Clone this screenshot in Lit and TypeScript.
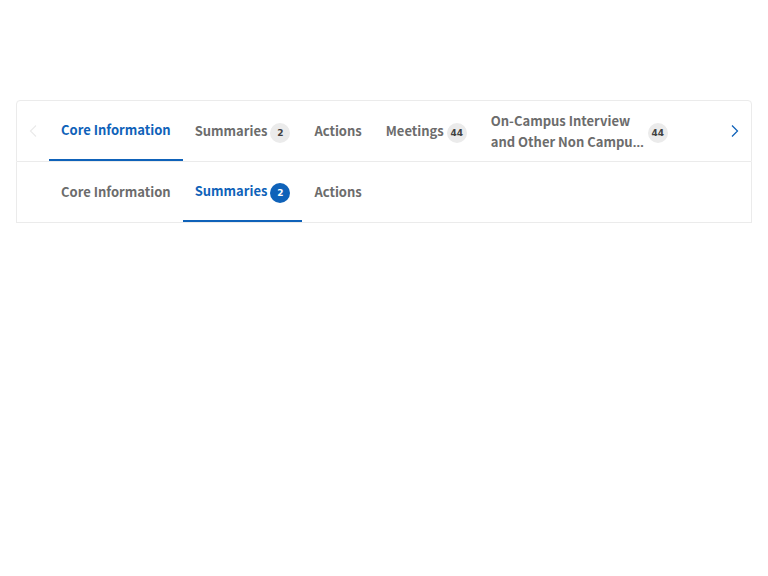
import { LitElement, html, css, nothing } from "lit";
import { customElement, property, state } from "lit/decorators.js";
import { classMap } from "lit/directives/class-map.js";

interface Tab {
  label: string;
  shortened?: boolean;
  count?: number;
}

@customElement("nav-tabs")
class NavTabs extends LitElement {
  @property({ attribute: false }) tabs: Tab[] = [];
  @property({ type: Number }) active = 0;
  @property({ type: Boolean }) scrollable = false;
  @property() label = "";

  static styles = css`
    :host {
      display: block;
      border: 1px solid #ebebeb;
      border-top-width: 0;
    }
    :host([scrollable]) {
      border-top-width: 1px;
      border-radius: 4px 4px 0 0;
    }
    .bar {
      display: grid;
      grid-template-columns: 32px minmax(0, 1fr) 32px;
      min-height: 60px;
    }
    .list {
      grid-column: 2;
      display: flex;
      overflow: hidden;
    }
    button {
      appearance: none;
      margin: 0;
      padding: 0;
      border: 0;
      background: none;
      font: inherit;
      color: inherit;
      cursor: pointer;
    }
    .tab {
      display: flex;
      flex: none;
      align-items: center;
      gap: 3px;
      padding: 0 12px;
      color: #6c6c6c;
      text-align: left;
    }
    .tab.active {
      border-bottom: 2px solid #0f62b9;
      color: #0f62b9;
    }
    .text {
      max-width: 154px;
      padding-bottom: 1px;
    }
    .ellipsis {
      font-family: "Noto Sans", sans-serif;
      line-height: 1;
    }
    .badge {
      display: grid;
      place-items: center;
      width: 20px;
      height: 20px;
      margin-top: 4px;
      border-radius: 50%;
      background: #ebebeb;
      color: #414141;
      font: 700 9px/20px "DejaVu Sans", sans-serif;
    }
    .active .badge {
      background: #0f62b9;
      color: #fff;
    }
    .arrow {
      display: grid;
      place-items: center;
      color: #0f62b9;
    }
    .arrow:disabled {
      color: #ebebeb;
      cursor: default;
    }
    svg {
      display: block;
      width: 16px;
      height: 16px;
      fill: none;
      stroke: currentColor;
      stroke-width: 1.25;
    }
  `;

  render() {
    return html`
      <div class="bar">
        ${this.scrollable
          ? html`<button class="arrow" aria-label="Previous tabs" disabled>
              <svg viewBox="0 0 16 16"><path d="M11 2.500 5.500 8l5.500 5.500" /></svg>
            </button>`
          : nothing}
        <div class="list" role="tablist" aria-label=${this.label}>
          ${this.tabs.map(
            (tab, i) => html`<button
              class=${classMap({ tab: true, active: i === this.active })}
              role="tab"
              aria-selected=${i === this.active}
              @click=${() => (this.active = i)}
            >
              <span class="text"
                >${tab.label}${tab.shortened
                  ? html`<span class="ellipsis">…</span>`
                  : nothing}</span
              >
              ${tab.count === undefined
                ? nothing
                : html`<span class="badge">${tab.count}</span>`}
            </button>`
          )}
        </div>
        ${this.scrollable
          ? html`<button class="arrow" aria-label="Next tabs">
              <svg viewBox="0 0 16 16"><path d="M5 2.500 10.500 8 5 13.500" /></svg>
            </button>`
          : nothing}
      </div>
    `;
  }
}

@customElement("app-root")
class AppRoot extends LitElement {
  @state() primary: Tab[] = [
    { label: "Core Information" },
    { label: "Summaries", count: 2 },
    { label: "Actions" },
    { label: "Meetings", count: 44 },
    {
      label: "On-Campus Interview and Other Non Campu",
      shortened: true,
      count: 44,
    },
  ];
  @state() secondary: Tab[] = [
    { label: "Core Information" },
    { label: "Summaries", count: 2 },
    { label: "Actions" },
  ];

  static styles = css`
    :host {
      display: block;
      padding: 100px 16px 16px;
      background: #fff;
      font: 700 13px/21px "Noto Sans CJK SC", sans-serif;
    }
  `;

  render() {
    return html`
      <nav-tabs scrollable label="Sections" .tabs=${this.primary} .active=${0}></nav-tabs>
      <nav-tabs label="Subsections" .tabs=${this.secondary} .active=${1}></nav-tabs>
    `;
  }
}
